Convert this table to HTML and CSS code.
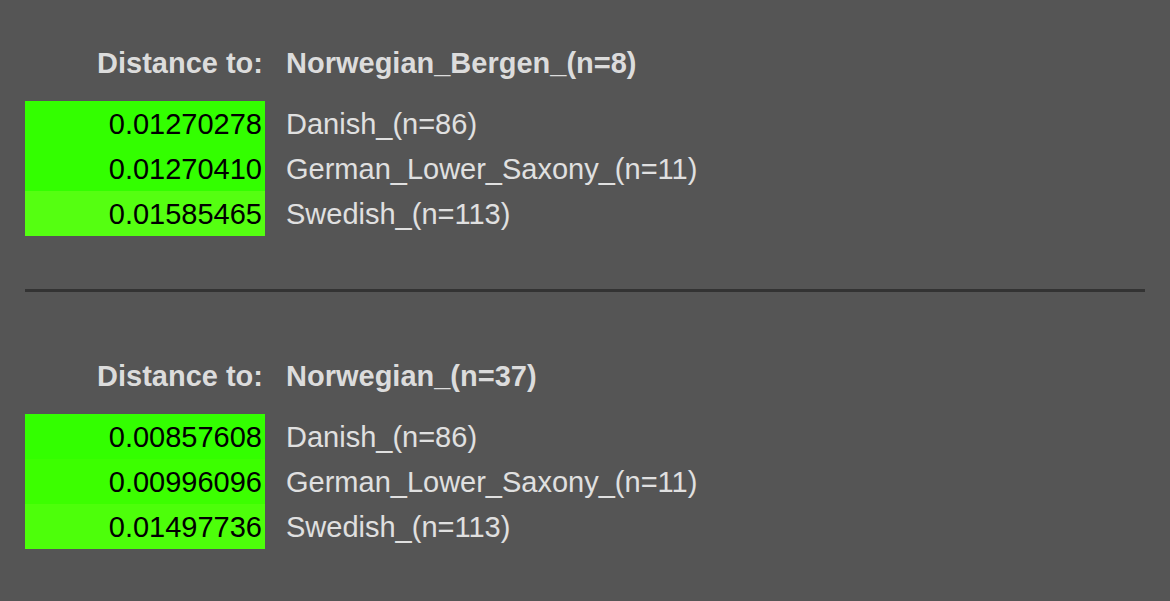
FILE: index.html
```html
<!DOCTYPE html>
<html>
<head>
<meta charset="utf-8">
<link rel="stylesheet" href="styles.css">
</head>
<body>
<div class="page">
  <section class="block first">
    <div class="head">
      <div class="label">Distance to:</div>
      <div class="target">Norwegian_Bergen_(n=8)</div>
    </div>
    <div class="rows">
      <div class="row"><div class="val" style="background:#33ff00">0.01270278</div><div class="name">Danish_(n=86)</div></div>
      <div class="row"><div class="val" style="background:#33ff00">0.01270410</div><div class="name">German_Lower_Saxony_(n=11)</div></div>
      <div class="row"><div class="val" style="background:#55ff11">0.01585465</div><div class="name">Swedish_(n=113)</div></div>
    </div>
  </section>
  <hr class="divider">
  <section class="block second">
    <div class="head">
      <div class="label">Distance to:</div>
      <div class="target">Norwegian_(n=37)</div>
    </div>
    <div class="rows">
      <div class="row"><div class="val" style="background:#33ff00">0.00857608</div><div class="name">Danish_(n=86)</div></div>
      <div class="row"><div class="val" style="background:#3cff00">0.00996096</div><div class="name">German_Lower_Saxony_(n=11)</div></div>
      <div class="row"><div class="val" style="background:#4dff0a">0.01497736</div><div class="name">Swedish_(n=113)</div></div>
    </div>
  </section>
</div>
</body>
</html>
```
FILE: styles.css
```css
html, body {
  margin: 0;
  padding: 0;
  background: #555555;
}
body {
  font-family: "Liberation Sans", Arial, sans-serif;
  font-size: 29px;
  color: #e0e0e0;
}
.page {
  padding: 0 25px;
  display: flex;
  flex-direction: column;
}
.block.first {
  padding-top: 40px;
}
.block.second {
  padding-top: 61px;
}
.head {
  display: grid;
  grid-template-columns: 240px 1fr;
  height: 45px;
  align-items: center;
  font-weight: bold;
  color: #dcdcdc;
  margin-bottom: 16px;
}
.head .label {
  text-align: right;
  padding-right: 2px;
  padding-top: 1px;
}
.head .target {
  padding-left: 21px;
  padding-top: 1px;
}
.rows {
  display: flex;
  flex-direction: column;
}
.row {
  display: grid;
  grid-template-columns: 240px 1fr;
  height: 45px;
}
.val {
  display: flex;
  align-items: center;
  justify-content: flex-end;
  padding-right: 3px;
  padding-top: 2px;
  color: #000;
}
.name {
  display: flex;
  align-items: center;
  padding-left: 21px;
  padding-top: 2px;
}
.divider {
  margin: 53px 0 0 0;
  border: 0;
  height: 3px;
  background: #333333;
}
```
